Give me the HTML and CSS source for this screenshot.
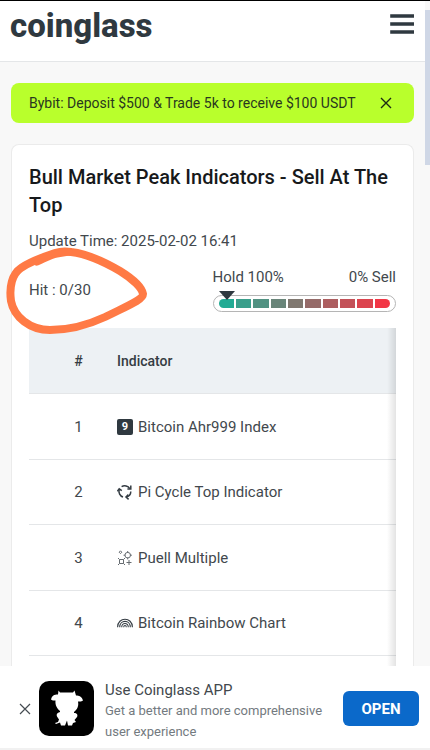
FILE: index.html
```html
<!DOCTYPE html>
<html lang="en">
<head>
    <meta charset="UTF-8">
    <meta name="viewport" content="width=device-width, initial-scale=1.0">
    <title>Bull Market Peak Indicators</title>
    <link rel="stylesheet" href="styles.css">
</head>
<body>
    <header class="header">
        <a class="logo" href="#">coinglass</a>
        <button class="menu-btn" type="button" aria-label="Menu">
            <svg width="24" height="22" viewBox="0 0 24 22"><path d="M2 3h21M2 11h21M2 19h21" stroke="#2f3940" stroke-width="3.6" stroke-linecap="square"/></svg>
        </button>
    </header>

    <main class="main">
        <div class="banner">
            <a href="#">Bybit: Deposit $500 &amp; Trade 5k to receive $100 USDT</a>
            <button type="button" aria-label="Close banner">
                <svg width="12" height="12" viewBox="0 0 12 12"><path d="M1 1l10 10M11 1L1 11" stroke="#1d2b14" stroke-width="1.4"/></svg>
            </button>
        </div>

        <section class="card">
            <h1>Bull Market Peak Indicators - Sell At The Top</h1>
            <p class="update">Update Time: 2025-02-02 16:41</p>

            <div class="summary">
                <div class="hit">
                    Hit : 0/30
                    <svg class="hit-circle" width="144" height="92" viewBox="0 0 144 92" fill="none" stroke="#ff7a45" stroke-linecap="round" stroke-linejoin="round">
                        <path stroke-width="8" d="M66 8C82 10 98 17 115 27C128 35 137 44 138 50C138 56 122 62 100 73C85 80 66 86 45 86C25 86 9 73 6 57C4 43 7 30 16 24C26 17 38 13 50 9C56 7 61 7 66 8"/>
                        <path stroke-width="7" d="M32 18C41 14 46 11 52 10L64 8"/>
                    </svg>
                </div>
                <div class="gauge">
                    <div class="gauge-labels"><span>Hold 100%</span><span>0% Sell</span></div>
                    <div class="gauge-bar">
                        <i class="s1"></i><i class="s2"></i><i class="s3"></i><i class="s4"></i><i class="s5"></i><i class="s6"></i><i class="s7"></i><i class="s8"></i><i class="s9"></i><i class="s10"></i>
                        <svg class="gauge-pointer" width="16" height="9" viewBox="0 0 16 9"><path d="M0 0h16L8 9z" fill="#2f3940"/></svg>
                    </div>
                </div>
            </div>

            <div class="table-wrap">
                <table>
                    <thead>
                        <tr><th class="num">#</th><th>Indicator</th></tr>
                    </thead>
                    <tbody>
                        <tr>
                            <td class="num">1</td>
                            <td><a href="#"><span class="badge">9</span>Bitcoin Ahr999 Index</a></td>
                        </tr>
                        <tr>
                            <td class="num">2</td>
                            <td><a href="#">
                                <svg class="icon" viewBox="0 0 16 16" fill="none" stroke="#343c43" stroke-width="1.5">
                                    <path d="M4.6 2.6A6 6 0 0 1 12.8 4.6M13.8 7.4A6 6 0 0 1 9.6 13M6 13A6 6 0 0 1 2.2 5.6"/>
                                    <path d="M13.8 1.6v3.4h-3.4M11.4 10.6l-2.4 2.4 2.6 2.4M.4 7.2l1.8-2.4 2.6 1.8"/>
                                </svg>Pi Cycle Top Indicator</a></td>
                        </tr>
                        <tr>
                            <td class="num">3</td>
                            <td><a href="#">
                                <svg class="icon" viewBox="0 0 16 16" fill="none" stroke="#666c71" stroke-width="1">
                                    <circle cx="10.7" cy="5.2" r="2.8"/>
                                    <path d="M10.7 1v2M10.7 7.4v2M6.5 5.2h2M12.9 5.2h2M3.5.8l1.3 1.4-1.3 1.4-1.3-1.4zM12 10v5M9.5 12.5h5"/>
                                    <path d="M2.5 9.5h4v4h-4zM1 8l1.5 1.5M8 8L6.5 9.5M1 15l1.5-1.5M8 15l-1.5-1.5"/>
                                </svg>Puell Multiple</a></td>
                        </tr>
                        <tr>
                            <td class="num">4</td>
                            <td><a href="#">
                                <svg class="icon" viewBox="0 0 16 16" fill="none" stroke="#343c43" stroke-width="1.1">
                                    <path d="M.6 12.2C.6 1.6 15.4 1.6 15.4 12.2M2.7 12.2C2.7 4.4 13.3 4.4 13.3 12.2M4.7 12.2c0-5 6.6-5 6.6 0M6.7 12.2c0-2.3 2.6-2.3 2.6 0"/>
                                </svg>Bitcoin Rainbow Chart</a></td>
                        </tr>
                    </tbody>
                </table>
            </div>
        </section>
    </main>

    <footer class="app-bar">
        <button class="app-close" type="button" aria-label="Close">
            <svg width="12" height="12" viewBox="0 0 12 12"><path d="M1 1l10 10M11 1L1 11" stroke="#454c52" stroke-width="1.2"/></svg>
        </button>
        <svg class="app-icon" width="55" height="55" viewBox="0 0 55 55">
            <rect width="55" height="55" rx="10"/>
            <path fill="#fff" d="M19.5 9.5L21 11.5h13l1.500-2 1.500 5c3 0 6 1 7 5-1 1-3 1-5 1 1 5-1 8-4 10.500v1c3 0 4 2 3 4l-2.500 3 1.500 2-3 1-1 2.500h-4l-1-5-2 5h-4l-1-3-4 1.500-1-1 3-1 1-2.500-2-3c-1-2 0-4 3-4.500v-1c-3-2.500-5-6-4.500-10.500-2 0-3.500 0-4.500-1 1-4 3-5 7-5z"/>
        </svg>
        <div class="app-text">
            <strong>Use Coinglass APP</strong>
            <span>Get a better and more comprehensive user experience</span>
        </div>
        <button class="open-btn" type="button">OPEN</button>
    </footer>

    <div class="scroll-thumb"></div>
</body>
</html>
```
FILE: styles.css
```css
:root {
    --text: #42484d;
    --dark: #2f3940;
    --line: #e4e6e8;
    --page: #f8f8f8;
}

* {
    box-sizing: border-box;
}

body {
    margin: 0;
    min-height: 100vh;
    display: flex;
    flex-direction: column;
    background: var(--page);
    border-top: 1px solid #000;
    color: var(--text);
    font-family: Roboto, "Noto Sans", sans-serif;
    font-size: 15px;
    line-height: 20px;
}

a {
    color: inherit;
    text-decoration: none;
}

button {
    display: flex;
    align-items: center;
    justify-content: center;
    border: 0;
    padding: 0;
    background: none;
    font-family: inherit;
    cursor: pointer;
}

.header {
    display: flex;
    justify-content: space-between;
    align-items: flex-start;
    height: 61px;
    padding: 4px 11px 0 10px;
    margin-right: 5px;
    background: #fff;
    border-bottom: 1px solid var(--line);
}

.logo {
    color: var(--dark);
    font-size: 33px;
    line-height: 42px;
    font-weight: 800;
}

.menu-btn {
    width: 24px;
    height: 38px;
}

.main {
    flex: 1;
    display: flex;
    flex-direction: column;
    padding: 21px 16px 0 11px;
}

.banner {
    display: flex;
    align-items: center;
    justify-content: space-between;
    height: 40px;
    padding: 0 22px 0 18px;
    border-radius: 8px;
    background: #b9ff2c;
    color: #29371f;
    font-size: 14px;
}

.card {
    flex: 1;
    display: flex;
    flex-direction: column;
    margin-top: 21px;
    padding: 18px 17px 0;
    background: #fff;
    border: 1px solid #ebebeb;
    border-bottom: 0;
    border-radius: 8px 8px 0 0;
}

h1 {
    margin: 0;
    color: #17191b;
    font-size: 20px;
    line-height: 28px;
    font-weight: 500;
}

.update {
    margin: 12px 0 16px;
}

.summary {
    display: flex;
    justify-content: space-between;
    margin-bottom: 16px;
}

.hit {
    position: relative;
    z-index: 1;
    padding-top: 13px;
}

.hit-circle {
    position: absolute;
    left: -24px;
    top: -23px;
}

.gauge {
    width: 50%;
}

.gauge-labels {
    display: flex;
    justify-content: space-between;
}

.gauge-bar {
    position: relative;
    display: flex;
    gap: 2px;
    height: 17px;
    margin-top: 8px;
    padding: 3px 5px;
    border: 1px solid #b5b5b5;
    border-radius: 9px;
}

.gauge-bar i {
    flex: 1;
}

.gauge-pointer {
    position: absolute;
    left: 5px;
    top: -5px;
}

.s1 { background: #22ab94; border-radius: 5px 0 0 5px; }
.s2 { background: #3a9f8b; }
.s3 { background: #519282; }
.s4 { background: #698579; }
.s5 { background: #807870; }
.s6 { background: #966b69; }
.s7 { background: #ad5e60; }
.s8 { background: #c35158; }
.s9 { background: #dc444e; }
.s10 { background: #f23645; border-radius: 0 5px 5px 0; }

.table-wrap {
    flex: 1;
    position: relative;
    min-height: 338px;
}

.table-wrap::after {
    content: "";
    position: absolute;
    top: 0;
    right: 0;
    bottom: 0;
    width: 9px;
    background: linear-gradient(to left, rgba(0, 0, 0, 0.11), rgba(0, 0, 0, 0));
}

table {
    width: 100%;
    border-spacing: 0;
}

th,
td {
    height: 66px;
    padding: 0;
    border-bottom: 1px solid var(--line);
    text-align: left;
}

tbody tr:nth-child(even) td {
    height: 65px;
}

th {
    background: #edf1f4;
    color: #353c43;
    font-size: 14px;
    font-weight: 500;
}

.num {
    width: 88px;
    padding-left: 11px;
    text-align: center;
}

td a {
    display: flex;
    align-items: center;
    gap: 5px;
}

.icon,
.badge {
    flex: none;
    width: 16px;
    height: 16px;
}

.badge {
    border-radius: 2px;
    background: var(--dark);
    color: #fff;
    font-size: 11px;
    line-height: 16px;
    font-weight: 700;
    text-align: center;
}

.app-bar {
    display: flex;
    align-items: center;
    height: 84px;
    padding: 3px 11px 0 19px;
    background: #fff;
    border-bottom: 2px solid #f1f1f1;
}

.app-close {
    width: 12px;
    height: 24px;
    margin-right: 8px;
}

.app-icon {
    flex: none;
    margin-right: 11px;
}

.app-text {
    flex: 1;
    display: flex;
    flex-direction: column;
    padding-top: 4px;
}

.app-text strong {
    font-weight: 400;
}

.app-text span {
    color: #737a80;
    font-size: 13px;
    line-height: 21px;
}

.open-btn {
    width: 76px;
    height: 35px;
    border-radius: 6px;
    background: #0b69ca;
    color: #fff;
    font-size: 15px;
    font-weight: 700;
}

.scroll-thumb {
    position: fixed;
    top: 10px;
    right: 0;
    width: 5px;
    height: 155px;
    background: #cfd7e6;
}
```
